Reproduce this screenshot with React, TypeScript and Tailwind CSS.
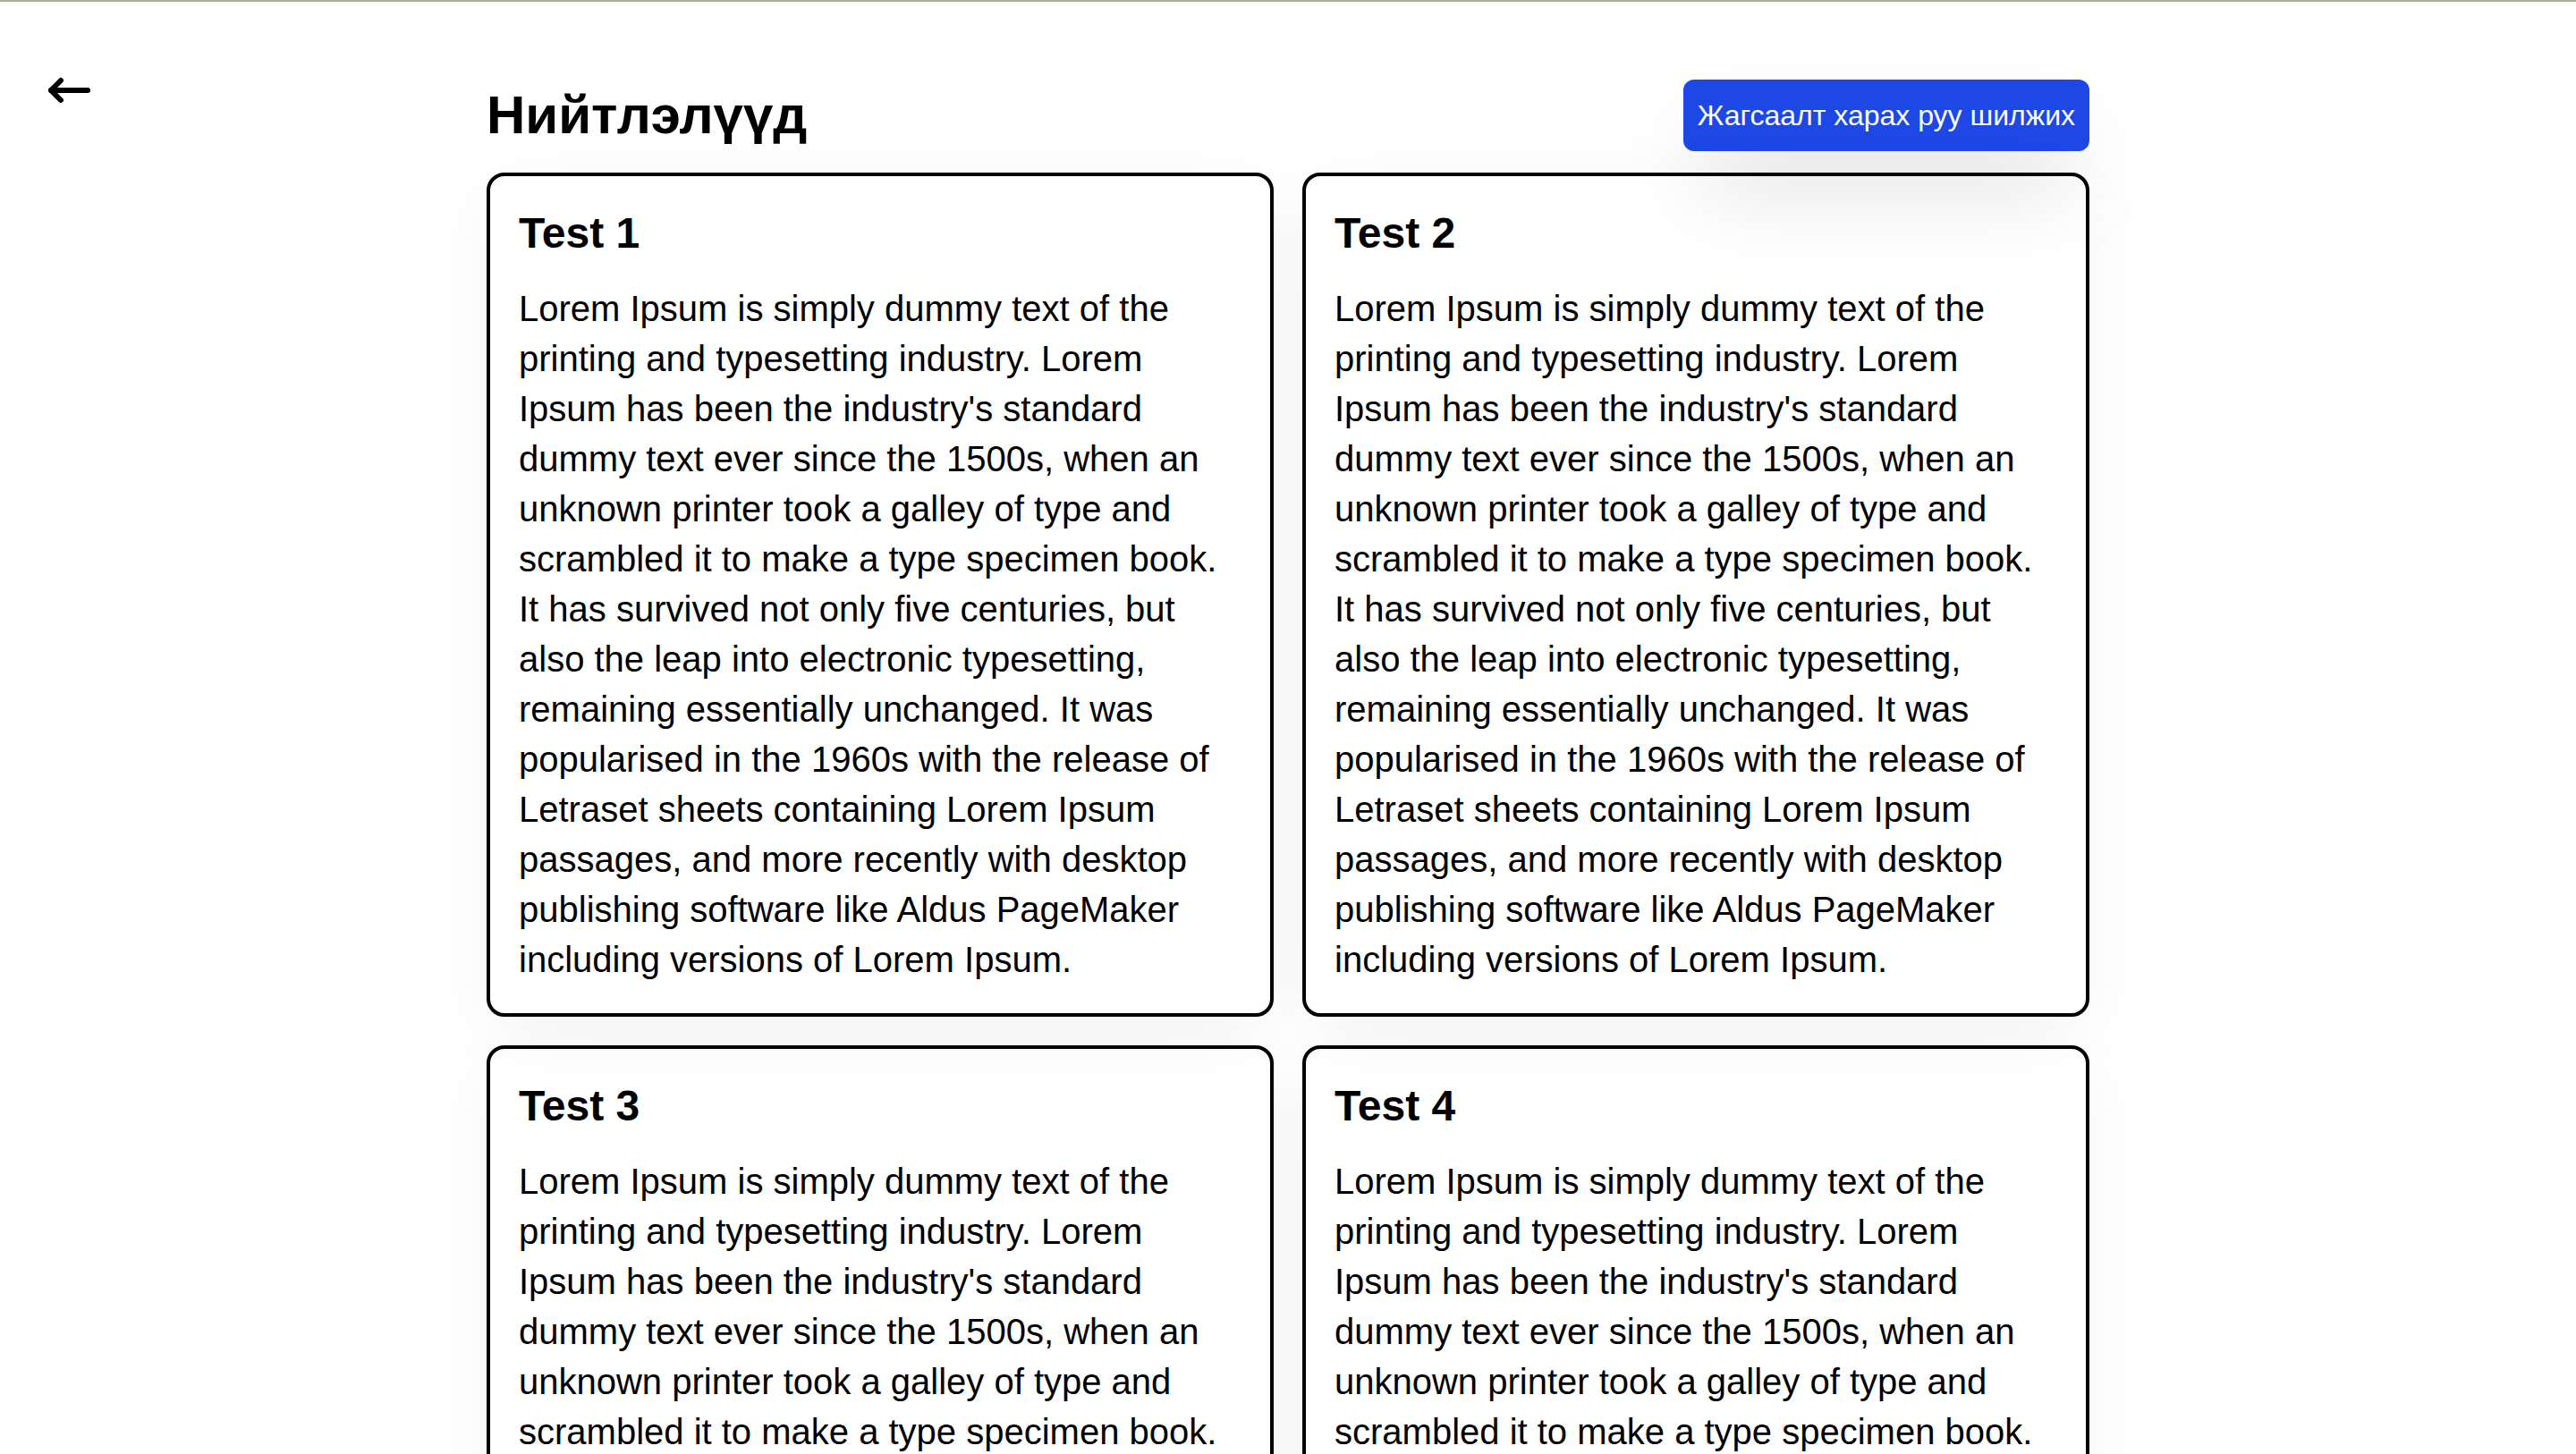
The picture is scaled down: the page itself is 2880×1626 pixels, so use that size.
const lorem =
    "Lorem Ipsum is simply dummy text of the printing and typesetting industry. Lorem Ipsum has been the industry's standard dummy text ever since the 1500s, when an unknown printer took a galley of type and scrambled it to make a type specimen book. It has survived not only five centuries, but also the leap into electronic typesetting, remaining essentially unchanged. It was popularised in the 1960s with the release of Letraset sheets containing Lorem Ipsum passages, and more recently with desktop publishing software like Aldus PageMaker including versions of Lorem Ipsum.";

type Post = {
    id: number;
    title: string;
    body: string;
};

const posts: Post[] = [
    { id: 1, title: "Test 1", body: lorem },
    { id: 2, title: "Test 2", body: lorem },
    { id: 3, title: "Test 3", body: lorem },
    { id: 4, title: "Test 4", body: lorem }
];

function BackArrow() {
    return (
        <svg width="50" height="32" viewBox="0 0 50 32" fill="none" stroke="currentColor" strokeWidth="6" strokeLinecap="round" strokeLinejoin="round">
            <path d="M4 16H45" />
            <path d="M15 5L4 16L15 27" />
        </svg>
    );
}

function PostCard({ post }: { post: Post }) {
    return (
        <div className="rounded-[20px] border-4 border-black px-8 py-8 shadow-[0_20px_90px_-10px_rgba(0,0,0,0.06)]">
            <h2 className="text-[48px] font-bold leading-[64px]">{post.title}</h2>
            <p className="mt-6 text-[40px] leading-[56px]">{post.body}</p>
        </div>
    );
}

export default function App() {
    return (
        <div className="min-h-screen bg-white font-['Liberation_Sans',Arial,sans-serif] text-black">
            <div className="h-[2px] bg-[#b0ad9f]" />
            <div className="grid grid-cols-[1fr_1792px_1fr] pt-[87px]">
                <div className="pl-[53px]">
                    <button className="-mt-1 block cursor-pointer text-black">
                        <BackArrow />
                    </button>
                </div>
                <main>
                    <div className="mb-6 flex items-center justify-between">
                        <h1 className="text-[60px] font-bold leading-[72px]">Нийтлэлүүд</h1>
                        <button className="cursor-pointer rounded-xl bg-[#1d48e5] px-4 py-4 text-[32px] leading-[48px] text-white shadow-[0_50px_100px_-24px_rgba(0,0,0,0.25)]">
                            Жагсаалт харах руу шилжих
                        </button>
                    </div>
                    <div className="grid grid-cols-2 gap-8">
                        {posts.map((post) => (
                            <PostCard key={post.id} post={post} />
                        ))}
                    </div>
                </main>
                <div />
            </div>
        </div>
    );
}
